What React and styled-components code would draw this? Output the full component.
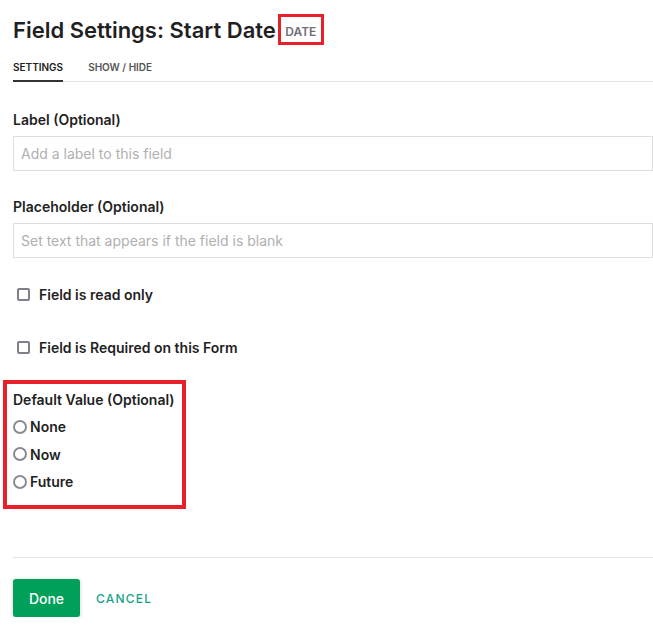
import React from "react";
import styled, { createGlobalStyle } from "styled-components";

const GlobalStyle = createGlobalStyle`
  body {
    margin: 0;
    background: #fff;
    font-family: Inter, "Noto Sans", sans-serif;
    color: #1f1f24;
  }
`;

const Page = styled.div`
  padding: 14px 0 0 13px;
  width: 640px;
`;

const Header = styled.div`
  display: flex;
  align-items: flex-end;
`;

const Title = styled.h1`
  margin: 0;
  font-size: 22px;
  font-weight: 600;
  line-height: 30px;
`;

const TypeBadge = styled.span`
  display: inline-flex;
  align-items: center;
  justify-content: center;
  box-sizing: border-box;
  width: 46px;
  height: 31px;
  margin-left: 2px;
  border: 3px solid #e8202a;
  font-size: 12px;
  font-weight: 600;
  color: #6e6e78;
  padding-top: 4px;
`;

const Tabs = styled.div`
  display: flex;
  gap: 25px;
  margin-top: 16px;
  border-bottom: 1px solid #e2e2e2;
`;

const Tab = styled.div`
  font-size: 10px;
  font-weight: 600;
  text-transform: uppercase;
  padding-bottom: 7px;
  color: ${(p) => (p.active ? "#222" : "#555")};
  border-bottom: 2px solid ${(p) => (p.active ? "#333" : "transparent")};
  margin-bottom: -1px;
`;

const Field = styled.div`
  margin-top: ${(p) => p.top}px;
`;

const FieldLabel = styled.div`
  font-size: 14px;
  font-weight: 600;
  line-height: 18px;
  margin-bottom: 7px;
`;

const Input = styled.input`
  display: block;
  box-sizing: border-box;
  width: 640px;
  height: 35px;
  border: 1px solid #dedede;
  padding: 0 7px;
  font-family: inherit;
  font-size: 14px;
  outline: none;
  &::placeholder {
    color: #b0b0b0;
  }
`;

const CheckRow = styled.label`
  display: flex;
  align-items: center;
  gap: 9px;
  padding-left: 4px;
  margin-top: ${(p) => p.top}px;
  font-size: 14px;
  font-weight: 600;
`;

const Box = styled.span`
  box-sizing: border-box;
  width: 13px;
  height: 13px;
  border: 2px solid #80808a;
  border-radius: 2px;
`;

const DefaultGroup = styled.div`
  box-sizing: border-box;
  margin: 24px 0 0 -10px;
  width: 183px;
  height: 129px;
  border: 4px solid #e8202a;
  padding: 7px 0 0 6px;
`;

const GroupLabel = styled.div`
  font-size: 14px;
  font-weight: 600;
  line-height: 18px;
  margin-bottom: 4px;
`;

const RadioRow = styled.label`
  display: flex;
  align-items: center;
  gap: 3px;
  height: 27.5px;
  font-size: 14px;
  font-weight: 600;
`;

const Circle = styled.span`
  box-sizing: border-box;
  width: 14px;
  height: 14px;
  border: 2px solid #8a8a94;
  border-radius: 50%;
`;

const Divider = styled.div`
  margin-top: 48px;
  height: 1px;
  background: #e2e2e2;
`;

const Actions = styled.div`
  display: flex;
  align-items: center;
  gap: 16px;
  margin-top: 21px;
`;

const DoneButton = styled.button`
  width: 67px;
  height: 38px;
  border: none;
  border-radius: 3px;
  background: #00a05a;
  color: #fff;
  font-family: inherit;
  font-size: 14px;
  font-weight: 500;
  box-shadow: 0 1px 4px rgba(0, 0, 0, 0.2);
`;

const CancelButton = styled.button`
  border: none;
  background: none;
  padding: 0;
  color: #14a38a;
  font-family: inherit;
  font-size: 12px;
  font-weight: 500;
  letter-spacing: 1.2px;
`;

export default function App() {
  return (
    <Page>
      <GlobalStyle />
      <Header>
        <Title>Field Settings: Start Date</Title>
        <TypeBadge>DATE</TypeBadge>
      </Header>
      <Tabs>
        <Tab active>Settings</Tab>
        <Tab>Show / Hide</Tab>
      </Tabs>
      <Field top={29}>
        <FieldLabel>Label (Optional)</FieldLabel>
        <Input placeholder="Add a label to this field" />
      </Field>
      <Field top={27}>
        <FieldLabel>Placeholder (Optional)</FieldLabel>
        <Input placeholder="Set text that appears if the field is blank" />
      </Field>
      <CheckRow top={28}>
        <Box />
        Field is read only
      </CheckRow>
      <CheckRow top={36}>
        <Box />
        Field is Required on this Form
      </CheckRow>
      <DefaultGroup>
        <GroupLabel>Default Value (Optional)</GroupLabel>
        <RadioRow>
          <Circle />
          None
        </RadioRow>
        <RadioRow>
          <Circle />
          Now
        </RadioRow>
        <RadioRow>
          <Circle />
          Future
        </RadioRow>
      </DefaultGroup>
      <Divider />
      <Actions>
        <DoneButton>Done</DoneButton>
        <CancelButton>CANCEL</CancelButton>
      </Actions>
    </Page>
  );
}
